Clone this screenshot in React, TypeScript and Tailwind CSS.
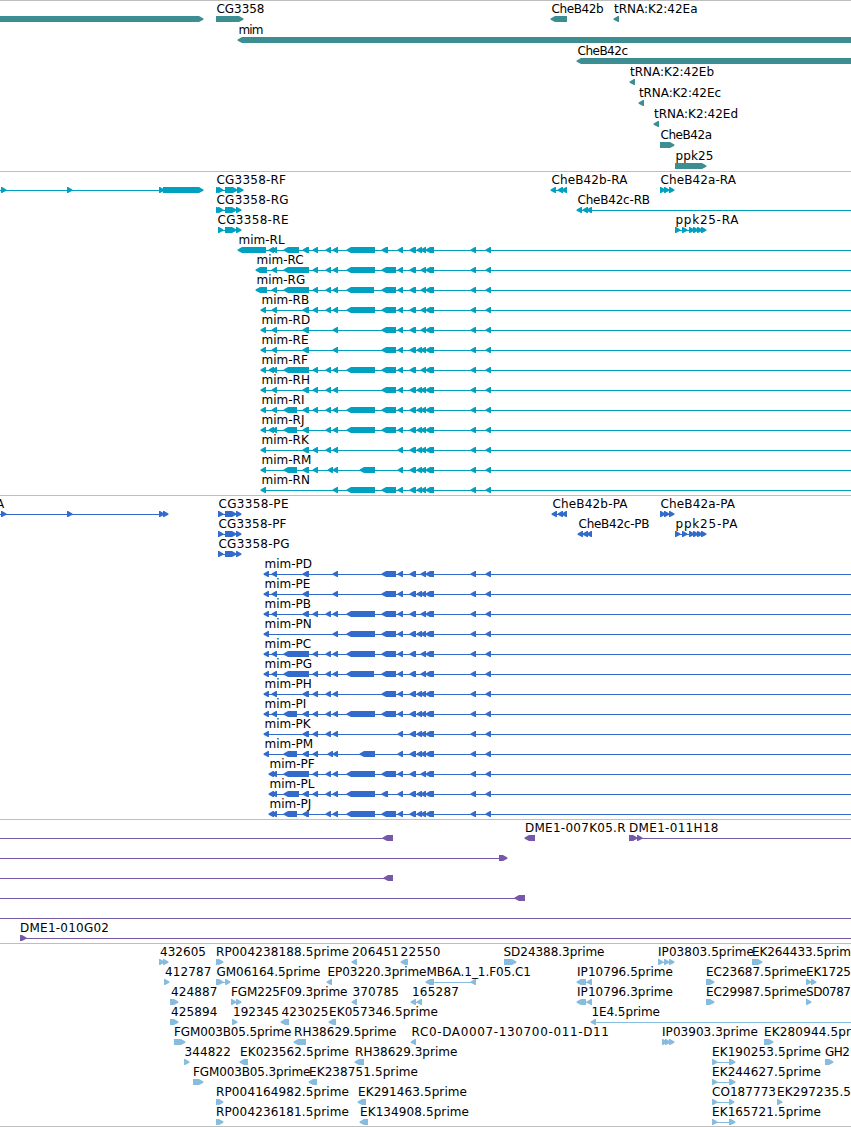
import clsx from 'clsx';

type Span = [number, number];

interface Feature {
  dir: 'l' | 'r';
  spans: Span[];
  label?: string;
  labelX?: number;
  labelWidth?: number;
  line?: Span;
}

const VIEW_WIDTH = 851;

const feat = (
  dir: 'l' | 'r',
  spans: Span[],
  label?: string,
  labelX?: number,
  labelWidth?: number,
  line?: Span,
): Feature => ({ dir, spans, label, labelX, labelWidth, line });

// exons shared by the mim isoforms
const EXON: Record<string, Span[]> = {
  a: [[238, 266]],
  b: [[256, 267]],
  c: [[261, 266]],
  d: [[264, 269]],
  e: [[269, 274], [272, 277]],
  f: [[272, 277]],
  g: [[284, 299]],
  h: [[284, 309]],
  i: [[284, 297]],
  j: [[303, 309]],
  k: [[313, 318]],
  l: [[326, 331]],
  m: [[333, 338]],
  n: [[347, 375]],
  o: [[347, 374]],
  p: [[382, 388]],
  q: [[382, 396]],
  r: [[398, 403]],
  s: [[328, 333]],
  t: [[360, 375]],
  y: [[410, 416], [421, 426], [426, 434], [471, 476], [486, 491]],
  z: [[410, 416], [417, 422], [421, 426], [426, 434], [471, 476], [486, 491]],
};

const mim = (name: string, keys: string): Feature[] => {
  const spans = keys.split('').flatMap((k) => EXON[k]);
  return [feat('l', spans, `mim-${name}`, spans[0][0], undefined, [spans[0][0] + 3, VIEW_WIDTH])];
};

const genes: Feature[][] = [
  [
    feat('r', [[-10, 203]]),
    feat('r', [[216, 243]], 'CG3358', 216, 49),
    feat('l', [[551, 567]], 'CheB42b', 551, 53),
    feat('l', [[614, 619]], 'tRNA:K2:42Ea', 613.5, 84.5),
  ],
  [feat('l', [[238, 870]], 'mim', 238, 26)],
  [feat('l', [[577, 870]], 'CheB42c', 577, 51.5)],
  [feat('l', [[630, 635]], 'tRNA:K2:42Eb', 629.5, 85)],
  [feat('l', [[639, 644]], 'tRNA:K2:42Ec', 638.5, 83)],
  [feat('l', [[654, 659]], 'tRNA:K2:42Ed', 653.5, 85)],
  [feat('r', [[660, 674]], 'CheB42a', 660, 52.5)],
  [feat('r', [[675, 706]], 'ppk25', 675, 39)],
];

const ppk: Span[] = [[675, 680], [682, 687], [689, 694], [693, 698], [697, 702], [701, 706]];
const cheA: Span[] = [[660, 665], [664, 669], [669, 674]];

const transcripts: Feature[][] = [
  [
    feat('r', [[1, 6], [67, 72], [159, 164], [163, 203]], undefined, undefined, undefined, [0, 165]),
    feat('r', [[216, 221], [218, 223], [225, 234], [230, 237], [237, 243]], 'CG3358-RF', 216, 70.5, [216, 240]),
    feat('l', [[551, 556], [558, 563], [562, 567]], 'CheB42b-RA', 551, 77, [553, 566]),
    feat('r', cheA, 'CheB42a-RA', 660, 76.5, [660, 671]),
  ],
  [
    feat('r', [[216, 221], [218, 223], [225, 234], [230, 236], [236, 241]], 'CG3358-RG', 216, 73, [216, 238]),
    feat('l', [[577, 582], [583, 588], [587, 592]], 'CheB42c-RB', 577, 73.5, [579, 851]),
  ],
  [
    feat('r', [[218, 223], [225, 234], [230, 236], [236, 241]], 'CG3358-RE', 217, 72, [218, 238]),
    feat('r', ppk, 'ppk25-RA', 675, 64, [675, 703]),
  ],
  mim('RL', 'aegjklmnprz'),
  mim('RC', 'bfhklmnqry'),
  mim('RG', 'bfhklmoqry'),
  mim('RB', 'cfjklmnqry'),
  mim('RD', 'cfjmqry'),
  mim('RE', 'cfjmqrz'),
  mim('RF', 'cehklmnqry'),
  mim('RH', 'cfjklmqrz'),
  mim('RI', 'cfijklmnqrz'),
  mim('RJ', 'ceijlmnqrz'),
  mim('RK', 'cjklmrz'),
  mim('RM', 'cijksmtrz'),
  mim('RN', 'cmnqrz'),
];

const cgP: Span[] = [[218, 223], [225, 234], [230, 236], [236, 241]];

const proteins: Feature[][] = [
  [
    feat('r', [[1, 6], [67, 72], [159, 164], [163, 168]], 'A', -4.5, undefined, [0, 165]),
    feat('r', cgP, 'CG3358-PE', 218, 71, [218, 238]),
    feat('l', [[552, 557], [558, 563], [562, 567]], 'CheB42b-PA', 552, 76, [554, 566]),
    feat('r', cheA, 'CheB42a-PA', 660, 75.5, [660, 671]),
  ],
  [
    feat('r', cgP, 'CG3358-PF', 218, 69, [218, 238]),
    feat('l', [[578, 583], [583, 588], [587, 592]], 'CheB42c-PB', 578, 72, [580, 591]),
    feat('r', ppk, 'ppk25-PA', 675, 63, [675, 703]),
  ],
  [feat('r', cgP, 'CG3358-PG', 218, 72, [218, 238])],
  mim('PD', 'dfjmqry'),
  mim('PE', 'dfjmqrz'),
  mim('PB', 'dfjklmnqry'),
  mim('PN', 'dmnqrz'),
  mim('PC', 'dfhklmnqry'),
  mim('PG', 'dfhklmoqry'),
  mim('PH', 'dfjklmqrz'),
  mim('PI', 'dfijklmnqrz'),
  mim('PK', 'djklmrz'),
  mim('PM', 'dijksmtrz'),
  mim('PF', 'ehklmnqry'),
  mim('PL', 'egjklmnprz'),
  mim('PJ', 'eijlmnqrz'),
];

const bacs: Feature[][] = [
  [
    feat('l', [[383, 393]], undefined, undefined, undefined, [0, 390]),
    feat('l', [[525, 535]], 'DME1-007K05.R', 524.5, 101.5),
    feat('r', [[629, 637], [637, 642]], 'DME1-011H18', 628.5, 90.5, [630, 851]),
  ],
  [feat('r', [[499, 507]], undefined, undefined, undefined, [0, 500])],
  [feat('l', [[384, 393]], undefined, undefined, undefined, [0, 390])],
  [feat('l', [[515, 525]], undefined, undefined, undefined, [0, 520])],
  [feat('r', [], undefined, undefined, undefined, [0, 851])],
  [feat('r', [[20, 26]], 'DME1-010G02', 19.5, 90, [20, 851])],
];

const ests: Feature[][] = [
  [
    feat('r', [[159, 164], [163, 168]], '432605', 159.5, 47),
    feat('r', [[216, 221], [218, 223]], 'RP004238188.5prime', 215.5, 134),
    feat('l', [[352, 357]], '206451', 351.5, 48),
    feat('l', [[401, 408]], '22550', 400, 41),
    feat('r', [[504, 516]], 'SD24388.3prime', 503, 102),
    feat('r', [[658, 663], [664, 669], [669, 674]], 'IP03803.5prime', 657.5, 97, [658, 671]),
    feat('r', [[752, 762]], 'EK264433.5prim', 751.5, 100),
  ],
  [
    feat('r', [[164, 169]], '412787', 164.5, 47.5),
    feat('r', [[216, 223], [225, 230]], 'GM06164.5prime', 216, 105, [217, 227]),
    feat('l', [[327, 332]], 'EP03220.3prime', 327, 100),
    feat('l', [[426, 434], [471, 476]], 'MB6A.1_1.F05.C1', 426, 105.5, [429, 474]),
    feat('l', [[577, 586], [587, 592]], 'IP10796.5prime', 576.5, 97, [580, 590]),
    feat('r', [[706, 714]], 'EC23687.5prime', 705.5, 101.5),
    feat('r', [[806, 811], [811, 816]], 'EK1725', 805.5, 46, [806, 813]),
  ],
  [
    feat('r', [[170, 178]], '424887', 170.5, 47.5),
    feat('r', [[231, 236], [236, 241]], 'FGM225F09.3prime', 230.5, 117.5, [231, 238]),
    feat('l', [[352, 357]], '370785', 352, 47.5),
    feat('l', [[411, 416], [417, 422]], '165287', 411.5, 48, [413, 420]),
    feat('l', [[577, 586], [587, 592]], 'IP10796.3prime', 576.5, 97, [580, 590]),
    feat('r', [[706, 714]], 'EC29987.5prime', 705.5, 101.5),
    feat('r', [[806, 811]], 'SD0787', 805.5, 46),
  ],
  [
    feat('r', [[170, 178]], '425894', 170.5, 47.5),
    feat('r', [[232, 237]], '192345', 232.5, 47),
    feat('l', [[281, 289]], '423025', 281, 48),
    feat('l', [[329, 336]], 'EK057346.5prime', 328.5, 110),
    feat('l', [[591, 596]], '1E4.5prime', 591, 69.5, [593, 851]),
  ],
  [
    feat('r', [[174, 185]], 'FGM003B05.5prime', 173.5, 118.5),
    feat('l', [[294, 306]], 'RH38629.5prime', 293.5, 103.5),
    feat('l', [[411, 416]], 'RC0-DA0007-130700-011-D11', 411, 198.5),
    feat('r', [[662, 667], [665, 670], [669, 674]], 'IP03903.3prime', 661.5, 97, [662, 671]),
    feat('r', [[764, 773]], 'EK280944.5pr', 763.5, 88),
  ],
  [
    feat('r', [[184, 189]], '344822', 184, 47.5),
    feat('l', [[240, 248]], 'EK023562.5prime', 239.5, 110),
    feat('l', [[355, 364]], 'RH38629.3prime', 354.5, 103.5),
    feat('r', [[712, 717], [729, 735]], 'EK190253.5prime', 711.5, 110, [713, 731]),
    feat('r', [[825, 833]], 'GH2', 824.5, 26),
  ],
  [
    feat('r', [[193, 203]], 'FGM003B05.3prime', 192.5, 118.5),
    feat('l', [[309, 317]], 'EK238751.5prime', 308.5, 110),
    feat('r', [[712, 717], [729, 735]], 'EK244627.5prime', 711.5, 110, [713, 731]),
  ],
  [
    feat('r', [[216, 221], [218, 223]], 'RP004164982.5prime', 215.5, 134),
    feat('l', [[358, 366]], 'EK291463.5prime', 357.5, 110),
    feat('r', [[712, 717], [729, 734]], 'CO187773', 711.5, 65, [713, 731]),
    feat('r', [[777, 782]], 'EK297235.5', 776.5, 75),
  ],
  [
    feat('r', [[216, 221], [218, 223]], 'RP004236181.5prime', 215.5, 134),
    feat('l', [[360, 368]], 'EK134908.5prime', 359.5, 110),
    feat('r', [[712, 717], [729, 735]], 'EK165721.5prime', 711.5, 110, [713, 731]),
  ],
];

// a box with a five pixel blunt head on its leading side
function arrowPoints([start, end]: Span, dir: 'l' | 'r') {
  if (dir === 'l') {
    const tip = start - 0.4;
    const neck = Math.min(start + 4, end);
    return `${tip},17.5 ${neck},15 ${end},15 ${end},21 ${neck},21 ${tip},18.8`;
  }
  const tip = end + 0.4;
  const neck = Math.max(end - 4, start);
  return `${start},15 ${neck},15 ${tip},17.5 ${tip},18.8 ${neck},21 ${start},21`;
}

function Lane({ features, tall }: { features: Feature[]; tall?: boolean }) {
  return (
    <svg
      width={VIEW_WIDTH}
      height={tall ? 21 : 20}
      className={clsx('block shrink-0 overflow-visible', tall ? 'h-[21px]' : 'h-5')}
    >
      {features.map((f, i) => (
        <g key={i}>
          {f.line && (
            <rect x={f.line[0]} y={18} width={f.line[1] - f.line[0]} height={1} fill="currentColor" />
          )}
          {f.spans.map((s, j) => (
            <polygon key={j} points={arrowPoints(s, f.dir)} fill="currentColor" />
          ))}
          {f.label && (
            <text
              x={(f.labelX ?? 0) + 0.5}
              y={12}
              textLength={f.labelWidth ? f.labelWidth - 1 : undefined}
              className="fill-black"
            >
              {f.label}
            </text>
          )}
        </g>
      ))}
    </svg>
  );
}

interface TrackProps {
  lanes: Feature[][];
  className: string;
  tall?: boolean;
}

function Track({ lanes, className, tall }: TrackProps) {
  return (
    <section className={clsx('flex flex-col border-t border-[#bebebe]', className)}>
      {lanes.map((features, i) => (
        <Lane key={i} features={features} tall={tall} />
      ))}
    </section>
  );
}

export default function App() {
  return (
    <main className="w-[851px] h-[1127px] overflow-hidden bg-white border-b border-[#bebebe] text-[12px] font-['DejaVu_Sans',sans-serif]">
      <Track lanes={genes} tall className="pb-0.5 text-[#3d8e93]" />
      <Track lanes={transcripts} className="pb-[3px] text-[#00a0c0]" />
      <Track lanes={proteins} className="pb-[3px] text-[#326bcc]" />
      <Track lanes={bacs} className="pb-[3px] text-[#7658a8]" />
      <Track lanes={ests} className="pb-0.5 text-[#87bcde]" />
    </main>
  );
}
